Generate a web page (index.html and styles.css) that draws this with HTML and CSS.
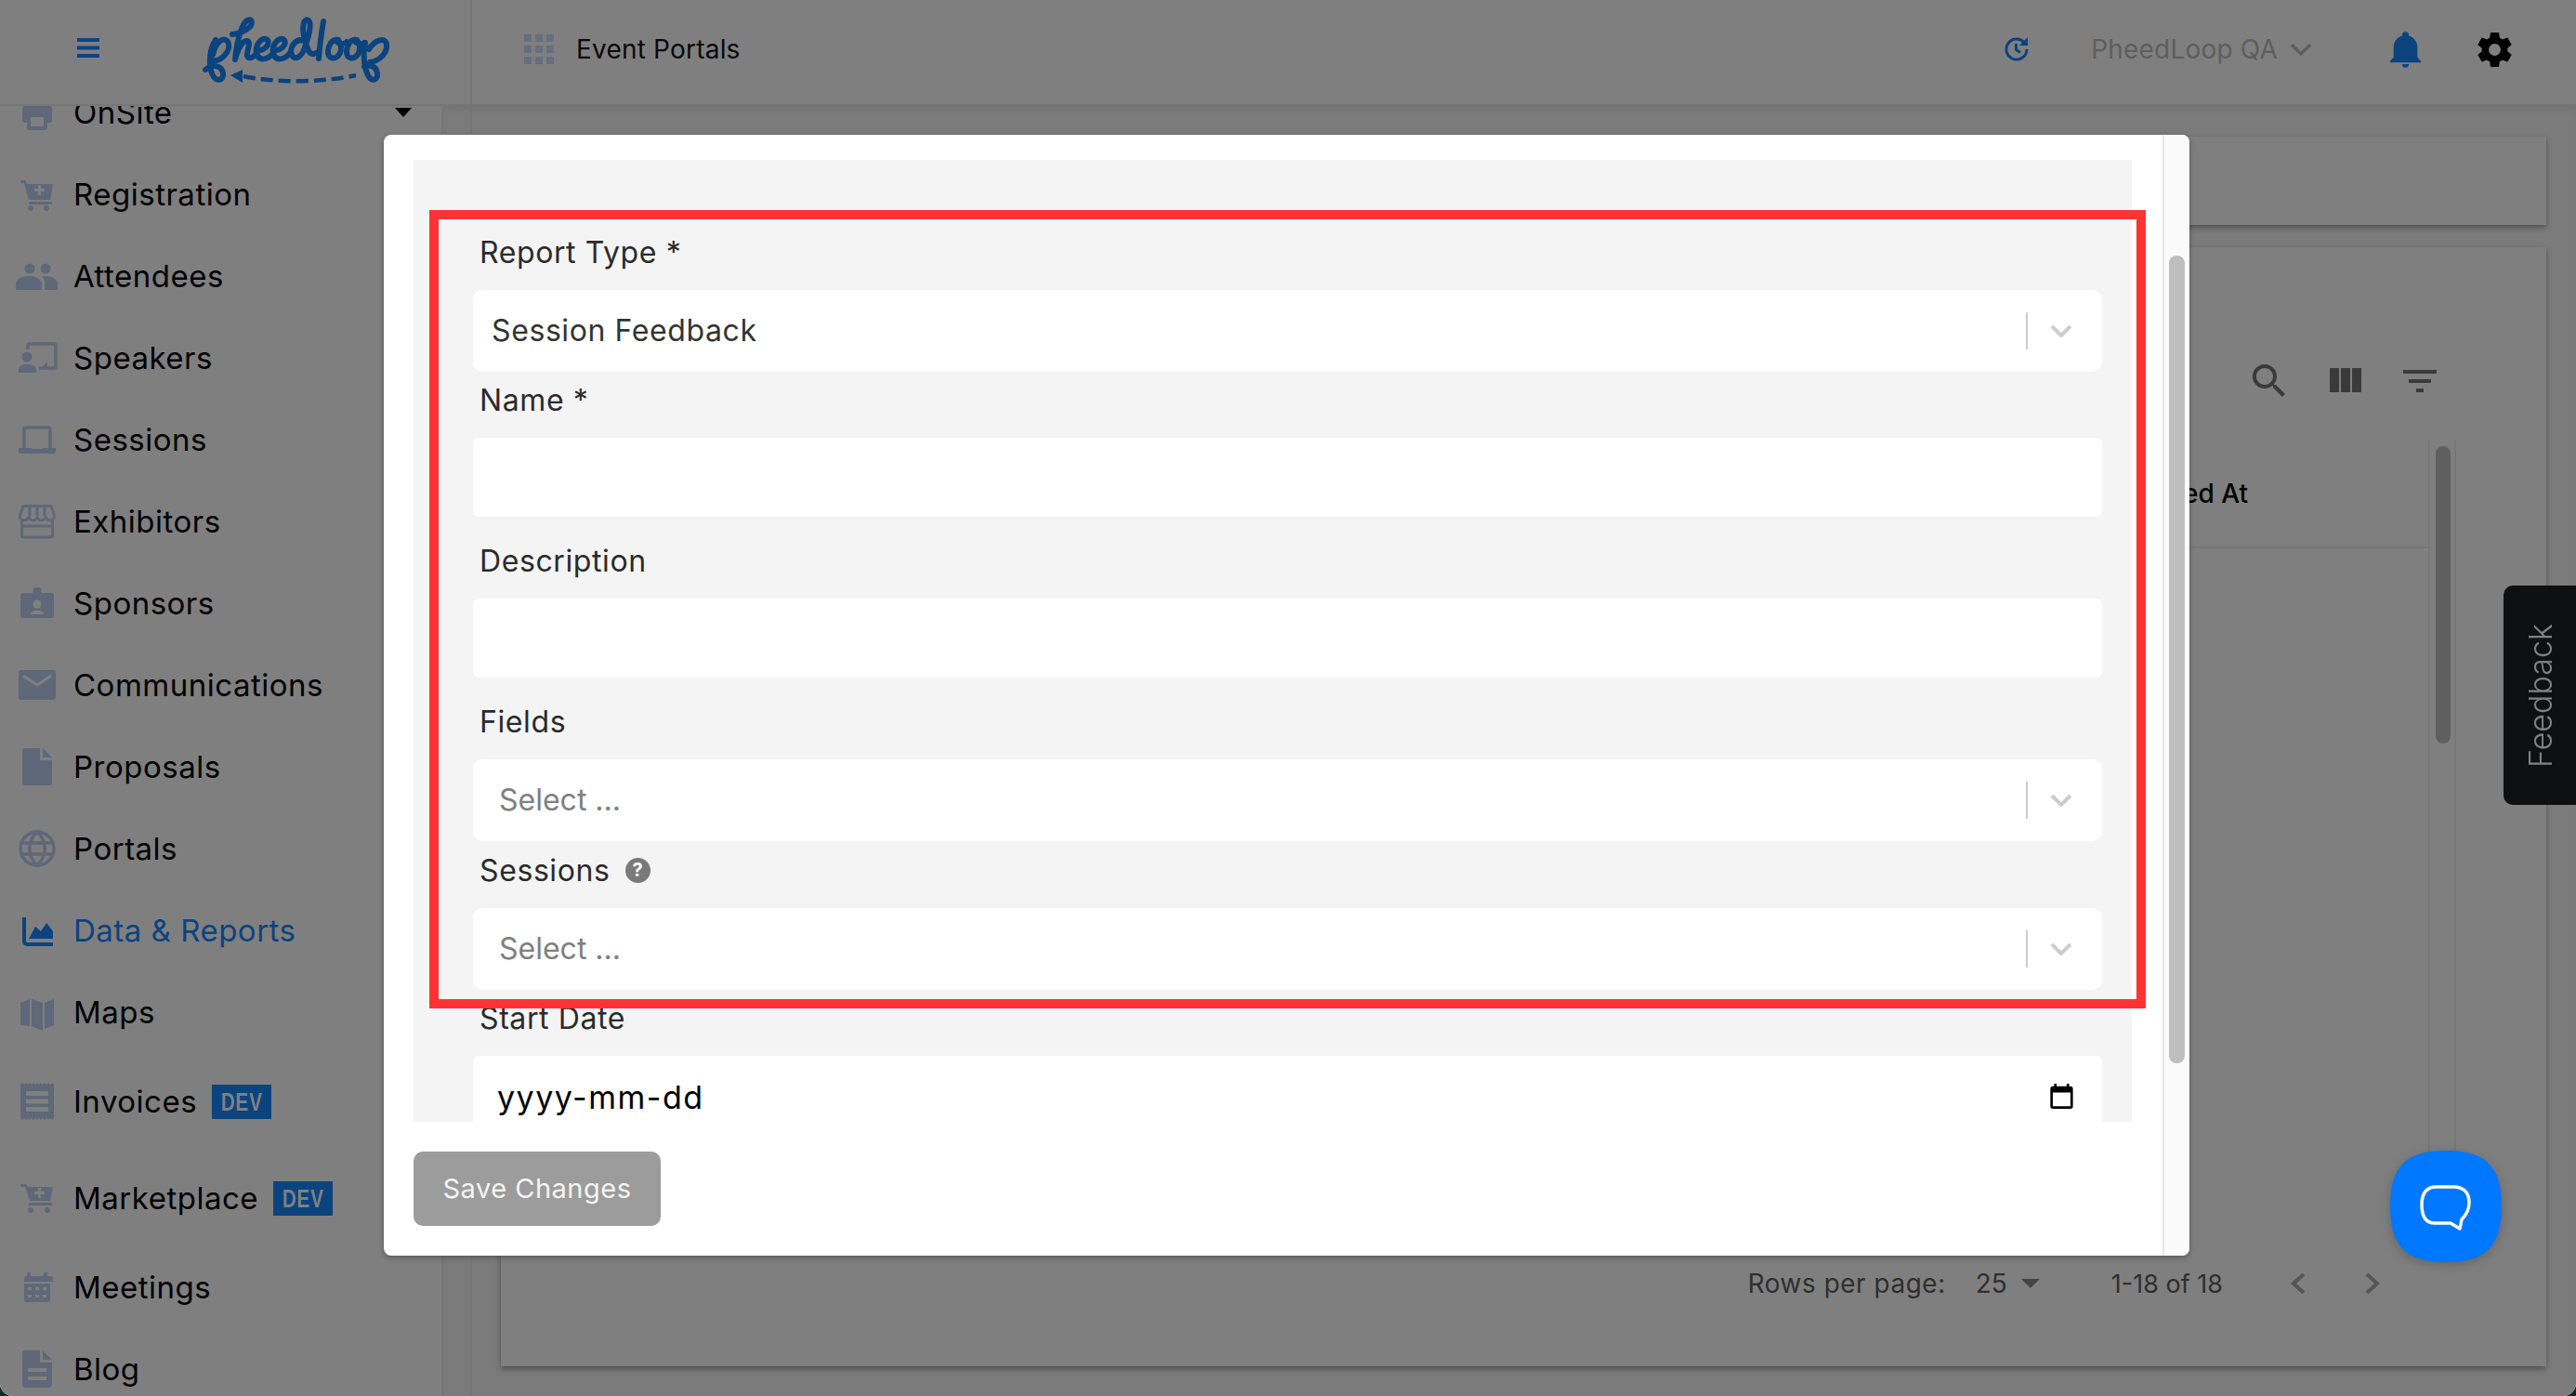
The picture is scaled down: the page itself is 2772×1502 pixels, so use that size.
FILE: index.html
```html
<!DOCTYPE html>
<html lang="en">
<head>
<meta charset="utf-8">
<title>PheedLoop - Data &amp; Reports</title>
<link rel="stylesheet" href="styles.css">
</head>
<body>
<div class="app">
  <header class="topbar">
    <div class="brand">
      <svg class="burger" viewBox="0 0 24 21"><path d="M0 0h24v4H0zM0 8.500h24v4H0zM0 17h24v4H0z"/></svg>
      <svg class="logo" viewBox="0 0 300 110">
        <g class="logo-line">
          <path d="M72 42C66 50 64 66 68 78C72 88 81 86 80 78C79 70 70 67 61 74"/>
          <path d="M69 58C72 44 82 36 86 46C88 54 78 66 68 64"/>
          <path d="M90 36C100 35 111 29 111 23C110 17 103 21 100 30C96 40 94 52 93 63C96 52 101 42 106 43C111 44 105 54 106 59C107 63 112 62 117 55"/>
          <path d="M117 53C124 54 131 47 128 42C123 37 114 47 116 56C118 65 128 64 134 56"/>
          <path d="M135 53C142 54 149 47 146 42C141 37 132 47 134 56C136 65 146 64 152 56"/>
          <path d="M167 43C158 39 151 51 154 58C157 65 165 60 168 50C172 40 176 24 172 21C167 18 164 27 168 42C171 52 173 60 180 56"/>
          <path d="M188 22C186 34 184 48 183 62"/>
          <path d="M204 42C196 40 191 52 194 59C198 65 207 60 207 50C207 45 204 41 201 42C204 47 210 47 213 44"/>
          <path d="M224 42C216 40 211 52 214 59C218 65 227 60 227 50C227 45 224 41 221 42C224 47 230 47 232 45"/>
          <path d="M233 45C230 58 232 72 236 80C240 88 247 85 246 78C245 70 238 68 232 71M237 52C243 42 255 38 256 47C257 56 248 65 238 66"/>
        </g>
        <path class="logo-dash" d="M102 81C140 89 190 87 223 80"/>
        <path class="logo-head" d="M88 80L101 74V88z"/>
      </svg>
    </div>
    <div class="bar-main">
      <svg class="apps" viewBox="0 0 32 32"><path d="M0 0h8v8H0zM12 0h8v8h-8zM24 0h8v8h-8zM0 12h8v8H0zM12 12h8v8h-8zM24 12h8v8h-8zM0 24h8v8H0zM12 24h8v8h-8zM24 24h8v8h-8z"/></svg>
      <span class="bar-title">Event Portals</span>
      <div class="bar-tools">
        <svg class="history" viewBox="0 0 26 26"><path class="history-line" d="M21 5.500A11 11 0 1 0 24 13M12.500 7v6.500l4.500 3"/><path class="history-head" d="M25 0v9h-9z"/></svg>
        <span class="org">PheedLoop QA</span>
        <svg class="org-chev" viewBox="0 0 24 14"><path d="M2 2l10 10L22 2"/></svg>
        <svg class="bell" viewBox="3 2 18 21"><path d="M21 19v1H3v-1l2-2v-6c0-3.100 2-5.800 5-6.700V4a2 2 0 0 1 4 0v.3c3 .9 5 3.600 5 6.700v6l2 2zm-7 2a2 2 0 0 1-4 0z"/></svg>
        <svg class="gear" viewBox="2 2 20 20"><path d="M12 15.500A3.500 3.500 0 0 1 8.500 12 3.500 3.500 0 0 1 12 8.500a3.500 3.500 0 0 1 3.500 3.500 3.500 3.500 0 0 1-3.500 3.500m7.430-2.530c.04-.32.07-.64.07-.97 0-.33-.03-.66-.07-1l2.110-1.630c.19-.15.24-.42.12-.64l-2-3.460c-.12-.22-.39-.31-.61-.22l-2.490 1c-.52-.39-1.060-.73-1.690-.98l-.37-2.650A.506.506 0 0 0 14 2h-4c-.25 0-.46.18-.5.42l-.37 2.650c-.63.25-1.170.59-1.690.98l-2.490-1c-.22-.09-.49 0-.61.22l-2 3.460c-.13.22-.07.49.12.64L4.570 11c-.04.34-.07.67-.07 1 0 .33.03.65.07.97l-2.110 1.660c-.19.15-.25.42-.12.64l2 3.460c.12.22.39.3.61.22l2.490-1.010c.52.4 1.060.74 1.690.99l.37 2.650c.04.24.25.42.5.42h4c.25 0 .46-.18.5-.42l.37-2.650c.63-.26 1.170-.59 1.690-.99l2.490 1.010c.22.08.49 0 .61-.22l2-3.460c.12-.22.07-.49-.12-.64l-2.110-1.660z"/></svg>
      </div>
    </div>
  </header>

  <div class="body-row">
    <nav class="sidebar">
      <ul class="nav">
        <li class="nav-item"><svg class="ico" viewBox="0 0 40 40"><path d="M10 4h20v10H10zM7 13h26a3 3 0 0 1 3 3v12a3 3 0 0 1-3 3h-2v5a3 3 0 0 1-3 3H12a3 3 0 0 1-3-3v-5H7a3 3 0 0 1-3-3V16a3 3 0 0 1 3-3z"/><path class="hole" d="M13 25h14v10H13z"/></svg><span>OnSite</span><i class="caret"></i></li>
        <li class="nav-item"><svg class="ico" viewBox="0 0 40 40"><path fill-rule="evenodd" d="M2 5h5l2 4h28l-3 17H11L6 8H2zM21 10v4h-4v3h4v4h3v-4h4v-3h-4v-4z"/><path d="M11 28h25v3H11z"/><circle cx="13" cy="35" r="3"/><circle cx="30" cy="35" r="3"/></svg><span>Registration</span></li>
        <li class="nav-item"><svg class="ico" viewBox="0 0 40 40"><circle cx="12" cy="12" r="5.500"/><circle cx="29" cy="12" r="5.500"/><path d="M-3 35v-6c0-6 7-9 14-9s14 3 14 9v6zM27 20c8 0 15 2 15 9v6H28v-7c0-3-1-6-3-8z"/></svg><span>Attendees</span></li>
        <li class="nav-item"><svg class="ico" viewBox="0 0 40 40"><path class="ico-line ico-line--bold" d="M10 11V7a2 2 0 0 1 2-2h26a2 2 0 0 1 2 2v22a2 2 0 0 1-2 2H22"/><path d="M24 31l7-7v7z"/><circle cx="9" cy="19" r="5.500"/><path d="M0 36v-4c0-3 4-5 9-5s10 2 10 5v4z"/></svg><span>Speakers</span></li>
        <li class="nav-item"><svg class="ico" viewBox="0 0 40 40"><path class="ico-line ico-line--bold" d="M6 30V9a2 2 0 0 1 2-2h24a2 2 0 0 1 2 2v21"/><path d="M0 29h14v1h12v-1h14v3a3 3 0 0 1-3 3H3a3 3 0 0 1-3-3z"/></svg><span>Sessions</span></li>
        <li class="nav-item"><svg class="ico" viewBox="0 0 40 40"><path class="ico-line" d="M5 3.500h30l3.500 10a4.500 4.500 0 0 1-9.500 1 4.500 4.500 0 0 1-9 0 4.500 4.500 0 0 1-9 0 4.500 4.500 0 0 1-9.500-1zM3.500 18v17a2 2 0 0 0 2 2h29a2 2 0 0 0 2-2V18M12 4v10M20 4v10M28 4v10M5 25h30"/></svg><span>Exhibitors</span></li>
        <li class="nav-item"><svg class="ico" viewBox="0 0 40 40"><rect x="2" y="9" width="36" height="27" rx="3"/><rect x="15.500" y="3" width="9" height="10" rx="3"/><circle class="hole" cx="20" cy="21" r="4.500"/><path class="hole" d="M13 32c0-3 3-4 7-4s7 1 7 4z"/></svg><span>Sponsors</span></li>
        <li class="nav-item"><svg class="ico" viewBox="0 0 40 40"><rect y="4" width="40" height="32" rx="3"/><path class="hole-line" d="M5 10l15 10 15-10"/></svg><span>Communications</span></li>
        <li class="nav-item"><svg class="ico" viewBox="0 0 40 40"><path d="M7 0h16v13h13v24a3 3 0 0 1-3 3H7a3 3 0 0 1-3-3V3a3 3 0 0 1 3-3zM26 0l10 10H26z"/></svg><span>Proposals</span></li>
        <li class="nav-item"><svg class="ico" viewBox="0 0 40 40"><path class="ico-globe" d="M20 2a18 18 0 1 0 0 36 18 18 0 0 0 0-36zM20 2c-11 10-11 26 0 36M20 2c11 10 11 26 0 36M3 14h34M3 26h34"/></svg><span>Portals</span></li>
        <li class="nav-item nav-item--active"><svg class="ico" viewBox="0 0 40 40"><path class="ico-line ico-line--wide" d="M6 6v26a3 3 0 0 0 3 3h28"/><path d="M11 29l7-13 6 5 6-9 7 9v8z"/></svg><span>Data &amp; Reports</span></li>
        <li class="nav-item"><svg class="ico" viewBox="0 0 40 40"><path d="M2 10l10-4v29L2 34zM14 6l12 4v30l-12-5zM28 10l10-4v28l-10 4z"/></svg><span>Maps</span></li>
        <li class="nav-item nav-item--tag"><svg class="ico" viewBox="0 0 40 40"><path d="M2 2l2-2 2 2 2-2 2 2 2-2 2 2 2-2 2 2 2-2 2 2 2-2 2 2 2-2 2 2 2-2 2 2 2-2 2 2v36l-2 2-2-2-2 2-2-2-2 2-2-2-2 2-2-2-2 2-2-2-2 2-2-2-2 2-2-2-2 2-2-2-2 2-2-2z"/><path class="hole" d="M8 9h24v5H8zM8 17.500h24v5H8zM8 26h24v5H8z"/></svg><span>Invoices</span><b class="dev"><span>DEV</span></b></li>
        <li class="nav-item nav-item--tag"><svg class="ico" viewBox="0 0 40 40"><path fill-rule="evenodd" d="M2 5h6l2 3h27l-3 15H12L7 8H2zM21 9v4h-4v3h4v4h3v-4h4v-3h-4V9z"/><path d="M11 25h25v3H11z"/><circle cx="13" cy="33" r="3"/><circle cx="31" cy="33" r="3"/></svg><span>Marketplace</span><b class="dev"><span>DEV</span></b></li>
        <li class="nav-item"><svg class="ico" viewBox="0 0 40 40"><path d="M9 4h4v4h14V4h4v4h3a3 3 0 0 1 3 3v3H6v-3a3 3 0 0 1 3-3zM6 16h28v17a3 3 0 0 1-3 3H9a3 3 0 0 1-3-3z" /><path class="hole" d="M10 20h4v3h-4zM18 20h4v3h-4zM26 20h4v3h-4zM10 28h4v3h-4zM18 28h4v3h-4zM26 28h4v3h-4z"/></svg><span>Meetings</span></li>
        <li class="nav-item"><svg class="ico" viewBox="0 0 40 40"><path d="M7 0h16v13h13v24a3 3 0 0 1-3 3H7a3 3 0 0 1-3-3V3a3 3 0 0 1 3-3zM26 0l10 10H26z"/><path class="hole" d="M10 19h20v4H10zM10 28h20v4H10z"/></svg><span>Blog</span></li>
      </ul>
    </nav>
    <main class="main">
      <div class="gutter"></div>
      <div class="content">
        <section class="card card--head"></section>
        <section class="card card--table">
          <div class="tools">
            <svg class="tool" viewBox="0 0 24 24"><path d="M15.500 14h-.79l-.28-.27A6.471 6.471 0 0 0 16 9.500 6.500 6.500 0 1 0 9.500 16c1.610 0 3.090-.59 4.230-1.570l.27.28v.79l5 4.990L20.490 19l-4.990-5zm-6 0C7.010 14 5 11.990 5 9.500S7.010 5 9.500 5 14 7.010 14 9.500 11.990 14 9.500 14z"/></svg>
            <svg class="tool" viewBox="0 0 24 24"><path d="M10 18h5V5h-5v13zm-6 0h5V5H4v13zM16 5v13h5V5h-5z"/></svg>
            <svg class="tool" viewBox="0 0 24 24"><path d="M10 18h4v-2h-4v2zM3 6v2h18V6H3zm3 7h12v-2H6v2z"/></svg>
          </div>
          <div class="table">
            <div class="table-col"><div class="table-head">Created At</div></div>
            <div class="table-track"><div class="table-thumb"></div></div>
          </div>
          <div class="pager">
            <span class="pager-label">Rows per page:</span>
            <span class="pager-size">25</span>
            <i class="pager-caret"></i>
            <span class="pager-range">1-18 of 18</span>
            <svg class="pager-chev" viewBox="0 0 18 24"><path d="M15 2L4 12l11 10"/></svg>
            <svg class="pager-chev pager-chev--next" viewBox="0 0 18 24"><path d="M3 2l11 10L3 22"/></svg>
          </div>
        </section>
      </div>
    </main>
  </div>

  <aside class="feedback"><span>Feedback</span></aside>

  <div class="overlay">
    <div class="modal">
      <div class="modal-main">
        <form class="form">
          <div class="label">Report Type *</div>
          <div class="select"><span class="value">Session Feedback</span><i class="sep"></i><svg class="chev" viewBox="0 0 24 14"><path d="M2 2l10 10L22 2"/></svg></div>
          <div class="label">Name *</div>
          <div class="input"></div>
          <div class="label">Description</div>
          <div class="input"></div>
          <div class="label">Fields</div>
          <div class="select"><span class="placeholder">Select ...</span><i class="sep"></i><svg class="chev" viewBox="0 0 24 14"><path d="M2 2l10 10L22 2"/></svg></div>
          <div class="label label--help">Sessions
            <svg class="help" viewBox="0 0 27 27"><circle cx="13.500" cy="13.500" r="13.500"/><text x="13.500" y="20" text-anchor="middle">?</text></svg>
          </div>
          <div class="select"><span class="placeholder">Select ...</span><i class="sep"></i><svg class="chev" viewBox="0 0 24 14"><path d="M2 2l10 10L22 2"/></svg></div>
          <div class="label">Start Date</div>
          <div class="date"><span class="date-text">yyyy-mm-dd</span><svg class="cal" viewBox="3 1 18 20"><path d="M19 3h-1V1h-2v2H8V1H6v2H5a2 2 0 0 0-2 2v14a2 2 0 0 0 2 2h14a2 2 0 0 0 2-2V5a2 2 0 0 0-2-2zm0 16H5V8h14v11z"/></svg></div>
        </form>
        <div class="modal-foot"><button class="save" type="button">Save Changes</button></div>
      </div>
      <div class="modal-track"><div class="modal-thumb"></div></div>
      <div class="highlight"></div>
    </div>
  </div>

  <button class="chat" type="button" aria-label="Chat">
    <svg viewBox="0 0 120 120"><path class="chat-bg" d="M60 0C102 0 120 16 120 60C120 104 102 120 60 120C18 120 0 104 0 60C0 16 18 0 60 0z"/><path class="chat-line" d="M50 39H68C80 39 85 46 85 56C85 64 81 70 77 74L75 84L65 78H48C38 78 34 70 34 58C34 46 39 39 50 39z"/></svg>
  </button>
</div>
</body>
</html>
```

FILE: styles.css
```css
* { box-sizing: border-box; }
html, body { margin: 0; height: 100%; background: #0c2a28; overflow: hidden; }
body { font-family: Inter, "Open Sans", "Liberation Sans", sans-serif; color: #000; }

.app {
  position: relative;
  width: 2772px;
  height: 1502px;
  background: #fff;
  border-radius: 0 0 14px 14px;
  overflow: hidden;
  display: flex;
  flex-direction: column;
}

/* top bar */
.topbar {
  display: flex;
  height: 114px;
  flex: none;
  background: #fff;
  border-bottom: 2px solid #ececec;
  position: relative;
  z-index: 2;
}
.brand {
  width: 508px;
  flex: none;
  display: flex;
  align-items: center;
  padding-left: 83px;
  border-right: 2px solid #ececec;
}
.burger { width: 24px; height: 21px; fill: #1686ff; flex: none; margin-bottom: 9px; }
.logo { width: 300px; height: 110px; margin-left: 53px; flex: none; }
.logo-line { fill: none; stroke: #1686ff; stroke-width: 6; stroke-linecap: round; stroke-linejoin: round; }
.logo-dash { fill: none; stroke: #1686ff; stroke-width: 4.500; stroke-dasharray: 13 6; }
.logo-head { fill: #1686ff; }
.bar-main { flex: 1; display: flex; align-items: center; padding: 0 69px 6px 56px; }
.apps { width: 32px; height: 32px; fill: #ccdefe; flex: none; }
.bar-title { margin-left: 24px; font-size: 28px; letter-spacing: .2px; color: #111; }
.bar-tools { margin-left: auto; display: flex; align-items: center; }
.history { width: 26px; height: 26px; }
.history-line { fill: none; stroke: #1686ff; stroke-width: 3; }
.history-head { fill: #1686ff; }
.org { margin-left: 67px; font-size: 28px; letter-spacing: .2px; color: #bcbcbc; }
.org-chev { width: 24px; height: 14px; margin-left: 13px; fill: none; stroke: #bcbcbc; stroke-width: 3.500; }
.bell { width: 33px; height: 39px; margin-left: 84px; fill: #1686ff; }
.gear { width: 37px; height: 39px; margin-left: 61px; fill: #000; }

.body-row { flex: 1; display: flex; min-height: 0; }

/* sidebar */
.sidebar { width: 477px; flex: none; overflow: hidden; border-right: 2px solid #eee; background: #fff; }
.nav { list-style: none; margin: -37px 0 0; padding: 0; }
.nav-item {
  height: 88px;
  display: flex;
  align-items: center;
  padding-left: 20px;
  font-size: 33px;
  letter-spacing: .5px;
  position: relative;
}
.nav-item--tag { height: 104px; }
.nav-item--active { color: #1686ff; }
.ico { width: 40px; height: 40px; flex: none; margin-right: 19px; fill: #bed0f0; overflow: visible; }
.nav-item--active .ico { fill: #1686ff; }
.ico-line { fill: none; stroke: #bed0f0; stroke-width: 3; }
.ico-line--bold { stroke-width: 3.500; }
.ico-line--wide { stroke: #1686ff; stroke-width: 4; }
.ico-globe { fill: none; stroke: #bed0f0; stroke-width: 3.500; }
.hole { fill: #fff; }
.hole-line { fill: none; stroke: #fff; stroke-width: 3; }
.caret {
  margin-left: auto;
  margin-right: 32px;
  border-left: 9px solid transparent;
  border-right: 9px solid transparent;
  border-top: 10px solid #000;
}
.dev {
  margin-left: 16px;
  width: 64px;
  height: 37px;
  background: #1686ff;
  color: #fff;
  font: 700 28px/37px "Liberation Sans", sans-serif;
  letter-spacing: 1px;
  display: flex;
  justify-content: center;
}
.dev span { display: block; transform: scaleX(.74); }

/* main */
.main { flex: 1; display: flex; min-width: 0; background: #f6f6f6; box-shadow: inset 0 6px 8px -4px rgba(0,0,0,.08); }
.gutter { width: 31px; flex: none; border-right: 2px solid #ececec; }
.content { flex: 1; min-width: 0; display: flex; flex-direction: column; gap: 24px; padding: 33px 32px 32px 31px; }
.card { background: #fff; box-shadow: 0 3px 6px rgba(0,0,0,.35); }
.card--head { height: 95px; flex: none; }
.card--table { flex: 1; display: flex; flex-direction: column; min-height: 0; }
.tools { display: flex; justify-content: flex-end; gap: 33px; padding: 120px 112px 0 0; }
.tool { width: 48px; height: 48px; fill: #747474; }
.table { display: flex; margin-top: 40px; height: 870px; }
.table-col { flex: 1; min-width: 0; }
.table-head {
  height: 116px;
  border-bottom: 2px solid #eee;
  display: flex;
  align-items: center;
  justify-content: flex-end;
  padding-right: 194px;
  font-size: 28px;
  font-weight: 500;
}
.table-track { width: 30px; margin-right: 97px; padding: 6px 4px 0 6px; border-left: 2px solid #eee; border-right: 2px solid #eee; }
.table-thumb { height: 320px; background: #bebebe; border-radius: 8px; }
.pager { height: 74px; display: flex; align-items: center; justify-content: flex-end; padding-right: 178px; font-size: 28px; color: #5e5e5e; }
.pager-label { letter-spacing: .5px; }
.pager-size { margin-left: 32px; }
.pager-caret { margin-left: 15px; border-left: 10px solid transparent; border-right: 10px solid transparent; border-top: 10px solid #8a8a8a; }
.pager-range { margin-left: 77px; font-size: 27px; }
.pager-chev { width: 18px; height: 24px; fill: none; stroke: #aaa; stroke-width: 4; margin-left: 72px; }
.pager-chev--next { margin-left: 62px; }

.feedback {
  position: absolute;
  right: 0;
  top: 630px;
  width: 78px;
  height: 236px;
  background: #1c1e22;
  border-radius: 10px 0 0 10px;
  color: #fff;
  font-size: 34px;
  font-weight: 300;
  display: flex;
  align-items: center;
  justify-content: center;
}
.feedback span { writing-mode: vertical-rl; transform: rotate(180deg); }

/* modal */
.overlay { position: absolute; inset: 0; background: rgba(0,0,0,.5); z-index: 10; padding: 145px 0 0 413px; }
.modal {
  position: relative;
  width: 1943px;
  height: 1206px;
  background: #fff;
  border-radius: 8px;
  display: flex;
  overflow: hidden;
  box-shadow: 0 2px 6px rgba(0,0,0,.3);
}
.modal-main { flex: 1; min-width: 0; display: flex; flex-direction: column; padding: 27px 33px 32px 32px; }
.form { flex: 1; min-height: 0; overflow: hidden; background: #f4f4f4; padding: 77px 32px 0 64px; color: #2b2b2b; }
.label { height: 48px; margin-bottom: 15px; padding: 0 0 2px 7px; font-size: 32px; letter-spacing: .6px; line-height: 46px; display: flex; align-items: center; }
.label--help { height: 49px; }
.help { width: 27px; height: 27px; margin-left: 16px; fill: #7a7a7a; }
.help text { fill: #fff; font-size: 20px; font-weight: 700; }
.select, .input, .date { background: #fff; display: flex; align-items: center; }
.select { height: 88px; margin-bottom: 8px; border-radius: 10px; font-size: 32px; padding-right: 32px; }
.input { height: 85px; margin-bottom: 25px; border-radius: 6px; }
.date { height: 88px; border-radius: 6px; padding: 0 31px 0 26px; font-size: 34px; color: #000; justify-content: space-between; }
.date-text { letter-spacing: 1.500px; }
.value { margin: 0 0 2px 20px; color: #333; letter-spacing: .6px; }
.placeholder { margin: 0 0 2px 28px; color: #808080; }
.sep { margin-left: auto; width: 2px; height: 40px; background: #ccc; }
.chev { width: 24px; height: 14px; margin-left: 24px; fill: none; stroke: #ccc; stroke-width: 4; }
.cal { width: 25px; height: 27px; fill: #000; margin-bottom: 2px; }
.modal-foot { flex: none; padding-top: 32px; }
.save {
  display: block;
  width: 266px;
  height: 80px;
  border: 0;
  border-radius: 10px;
  background: #9c9c9c;
  color: #f4f4f4;
  font: 400 29px Inter, "Liberation Sans", sans-serif;
  letter-spacing: .5px;
  padding: 0 0 2px;
}
.modal-track { width: 29px; flex: none; background: #fafafa; border-left: 2px solid #e8e8e8; padding: 130px 5px 0; }
.modal-thumb { height: 869px; border-radius: 8px; background: #bebebe; }
.highlight {
  position: absolute;
  left: 49px;
  top: 81px;
  width: 1847px;
  height: 859px;
  border: 10px solid #ff3333;
  pointer-events: none;
}

.chat {
  position: absolute;
  left: 2572px;
  top: 1238px;
  width: 120px;
  height: 120px;
  padding: 0;
  border: 0;
  background: none;
  z-index: 20;
  filter: drop-shadow(0 3px 6px rgba(0,0,0,.2));
}
.chat svg { display: block; width: 120px; height: 120px; }
.chat-bg { fill: #0077ff; }
.chat-line { fill: none; stroke: #fff; stroke-width: 3.500; stroke-linejoin: round; }
```
